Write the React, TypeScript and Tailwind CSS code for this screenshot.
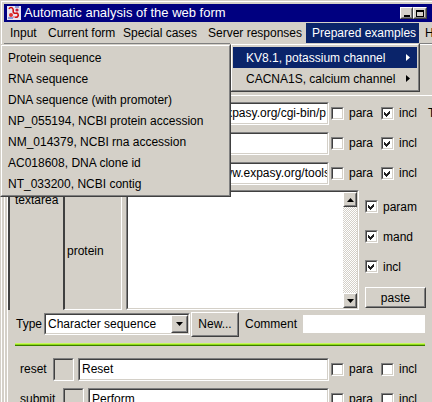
import React from "react";

type Kids = { className?: string; children?: React.ReactNode };

function Raised({ className = "", children }: Kids) {
  return (
    <div className={`border border-t-white border-l-white border-b-[#404040] border-r-[#404040] ${className}`}>
      <div className="w-full h-full border border-t-[#d4d0c8] border-l-[#d4d0c8] border-b-[#808080] border-r-[#808080] bg-[#d4d0c8] flex items-center justify-center">
        {children}
      </div>
    </div>
  );
}

function Sunken({ className = "", inner = "bg-white", children }: Kids & { inner?: string }) {
  return (
    <div className={`border border-t-[#808080] border-l-[#808080] border-b-white border-r-white ${className}`}>
      <div className={`w-full h-full border border-t-[#404040] border-l-[#404040] border-b-[#d4d0c8] border-r-[#d4d0c8] overflow-hidden ${inner}`}>
        {children}
      </div>
    </div>
  );
}

function Check({ checked }: { checked?: boolean }) {
  return (
    <Sunken className="w-[13px] h-[13px] shrink-0">
      {checked && (
        <svg width="9" height="9" viewBox="0 0 9 9" className="block">
          <path d="M1 3h1v1h1v1h1V4h1V3h1V2h1v3H6v1H5v1H4v1H3V7H2V6H1z" fill="#222" />
        </svg>
      )}
    </Sunken>
  );
}

function DownTri() {
  return (
    <svg width="7" height="4" viewBox="0 0 7 4" className="block">
      <path d="M0 0h7L3.5 4z" fill="#000" />
    </svg>
  );
}

function UpTri() {
  return (
    <svg width="7" height="4" viewBox="0 0 7 4" className="block">
      <path d="M0 4h7L3.5 0z" fill="#000" />
    </svg>
  );
}

function RightTri({ color }: { color: string }) {
  return (
    <svg width="4" height="7" viewBox="0 0 4 7" className="block">
      <path d="M0 0v7l4-3.5z" fill={color} />
    </svg>
  );
}

function Opts({ para, incl }: { para?: boolean; incl?: boolean }) {
  return (
    <>
      <div className="ml-[2px] w-[50px] flex items-center shrink-0">
        <Check checked={para} />
        <span className="ml-[5px]">para</span>
      </div>
      <div className="w-[47px] flex items-center shrink-0">
        <Check checked={incl} />
        <span className="ml-[5px]">incl</span>
      </div>
    </>
  );
}

function UrlRow({ text, shift, tail }: { text: string; shift: string; tail?: string }) {
  return (
    <div className="h-[30px] flex items-center shrink-0">
      <div className="w-[118px] shrink-0" />
      <Sunken className="w-[203px] h-[23px] shrink-0">
        <div className="h-full flex items-center justify-end whitespace-nowrap">
          <span className={`shrink-0 ${shift}`}>{text}</span>
        </div>
      </Sunken>
      <Opts para={false} incl={true} />
      {tail && <span>{tail}</span>}
    </div>
  );
}

function TitleIcon() {
  return (
    <svg width="16" height="16" viewBox="0 0 16 16" className="block">
      <rect x="1" y="1" width="14" height="14" fill="#e8e4f0" />
      <path d="M3 4c1-2 3-2 4 0s-1 3 1 4 3-1 4 1-1 4-3 3" stroke="#d01010" strokeWidth="1.6" fill="none" />
      <circle cx="5" cy="10" r="2" fill="#e03030" />
      <circle cx="11" cy="5" r="1.6" fill="#c02040" />
      <path d="M2 13h5M9 2h4" stroke="#3050c0" strokeWidth="1" />
      <circle cx="8" cy="12" r="1" fill="#f08080" />
    </svg>
  );
}

const menu: { label: string; w: string; active?: boolean }[] = [
  { label: "Input", w: "w-[38px]" },
  { label: "Current form", w: "w-[75px]" },
  { label: "Special cases", w: "w-[85px]" },
  { label: "Server responses", w: "w-[104px]" },
  { label: "Prepared examples", w: "w-[113px]", active: true },
  { label: "Help", w: "w-[40px]" },
];

const examples = [
  "Protein sequence",
  "RNA sequence",
  "DNA sequence (with promoter)",
  "NP_055194, NCBI protein accession",
  "NM_014379, NCBI rna accession",
  "AC018608, DNA clone id",
  "NT_033200, NCBI contig",
];

export default function App() {
  return (
    <div className="relative w-[432px] h-[402px] overflow-hidden bg-[#d4d0c8] text-[12px] leading-[14px] text-black font-['Liberation_Sans',Arial,sans-serif]">
      <div className="h-full pt-[4px] pl-[4px] shadow-[inset_1px_1px_0_#d4d0c8,inset_2px_2px_0_#ffffff] flex flex-col">
        {/* Title bar */}
        <div className="h-[18px] bg-[#000080] flex items-center shrink-0">
          <div className="ml-[2px]">
            <TitleIcon />
          </div>
          <span className="ml-[2px] text-white text-[13px] leading-[16px] whitespace-nowrap">
            Automatic analysis of the web form
          </span>
          <div className="ml-auto mr-[5px] flex items-center">
            <Raised className="w-[13px] h-[12px]">
              <div className="w-[6px] h-[2px] bg-black mt-[5px]" />
            </Raised>
            <Raised className="w-[14px] h-[12px]">
              <div className="w-[8px] h-[7px] border border-black border-t-2" />
            </Raised>
          </div>
        </div>

        {/* Menu bar */}
        <div className="h-[21px] pt-[1px] flex shrink-0">
          {menu.map((m) => (
            <div
              key={m.label}
              className={`${m.w} h-[20px] pl-[6px] flex items-center whitespace-nowrap shrink-0 ${
                m.active ? "bg-[#0a246a] text-white" : ""
              }`}
            >
              {m.label}
            </div>
          ))}
        </div>
        <div className="h-[1px] bg-[#808080] shrink-0" />
        <div className="h-[1px] bg-white shrink-0" />

        {/* Content */}
        <div className="flex-1 border-l border-white flex flex-col">
          <div className="ml-[2px] border-l border-white flex flex-col">
            <div className="h-[51px] border-b border-white shrink-0" />
            <div className="h-[2px] shrink-0" />
            <UrlRow text="http://www.expasy.org/cgi-bin/p" shift="mr-[1px]" tail="T" />
            <UrlRow text="" shift="" />
            <UrlRow text="http://www.expasy.org/tools" shift="mr-[-3px]" />
            <div className="h-[2px] shrink-0" />

            {/* textarea section */}
            <div className="h-[120px] flex shrink-0">
              <div className="w-[55px] border-l-2 border-[#404040] pl-[5px] pt-[3px] shrink-0">textarea</div>
              <div className="w-[59px] border-l-2 border-l-[#404040] border-r border-r-white border-b border-b-white pl-[2px] pt-[3px] flex items-center shrink-0">
                protein
              </div>
              <div className="w-[4px] shrink-0" />
              <Sunken className="w-[233px] h-full shrink-0">
                <div className="h-full flex">
                  <div className="flex-1 bg-white" />
                  <div className="w-[14px] flex flex-col">
                    <Raised className="w-[14px] h-[15px]">
                      <UpTri />
                    </Raised>
                    <div className="flex-1 bg-[repeating-conic-gradient(#d4d0c8_0%_25%,#ffffff_0%_50%)] bg-[length:2px_2px]" />
                    <Raised className="w-[14px] h-[15px]">
                      <DownTri />
                    </Raised>
                  </div>
                </div>
              </Sunken>
              <div className="w-[6px] shrink-0" />
              <div className="flex flex-col pt-[10px] shrink-0">
                <div className="h-[13px] flex items-center">
                  <Check checked />
                  <span className="ml-[5px]">param</span>
                </div>
                <div className="h-[13px] mt-[17px] flex items-center">
                  <Check checked />
                  <span className="ml-[5px]">mand</span>
                </div>
                <div className="h-[13px] mt-[17px] flex items-center">
                  <Check checked />
                  <span className="ml-[5px]">incl</span>
                </div>
                <Raised className="mt-[14px] w-[61px] h-[21px]">
                  <span>paste</span>
                </Raised>
              </div>
            </div>

            {/* Type row */}
            <div className="h-[28px] flex items-center shrink-0">
              <div className="w-[36px] pl-[8px] shrink-0">Type</div>
              <Sunken className="w-[146px] h-[22px] shrink-0">
                <div className="h-full flex">
                  <div className="flex-1 pl-[2px] flex items-center whitespace-nowrap">Character sequence</div>
                  <Raised className="w-[17px] h-full">
                    <DownTri />
                  </Raised>
                </div>
              </Sunken>
              <Raised className="ml-[1px] w-[48px] h-[25px] shrink-0">
                <span>New...</span>
              </Raised>
              <div className="ml-[6px] w-[58px] shrink-0">Comment</div>
              <div className="w-[122px] h-[18px] bg-white shrink-0" />
            </div>

            {/* green separator */}
            <div className="mt-[5px] ml-[7px] w-[410px] h-[3px] flex flex-col shrink-0">
              <div className="h-[1px] bg-[#c8f860]" />
              <div className="h-[1px] bg-[#90d818]" />
              <div className="h-[1px] bg-[#3c7c00]" />
            </div>

            {/* reset row */}
            <div className="mt-[11px] h-[24px] flex items-center shrink-0">
              <div className="w-[45px] pl-[12px] shrink-0">reset</div>
              <Sunken className="w-[21px] h-[23px] shrink-0" inner="bg-[#d4d0c8]" />
              <div className="w-[4px] shrink-0" />
              <Sunken className="w-[251px] h-[23px] shrink-0">
                <div className="h-full pl-[2px] flex items-center">Reset</div>
              </Sunken>
              <Opts />
            </div>

            {/* submit row */}
            <div className="mt-[6px] h-[24px] flex items-center shrink-0">
              <div className="w-[55px] pl-[12px] shrink-0">submit</div>
              <Sunken className="w-[21px] h-[23px] shrink-0" inner="bg-[#d4d0c8]" />
              <div className="w-[4px] shrink-0" />
              <Sunken className="w-[241px] h-[23px] shrink-0">
                <div className="h-full pl-[2px] flex items-center">Perform</div>
              </Sunken>
              <Opts />
            </div>
          </div>
        </div>
      </div>

      {/* Prepared examples dropdown */}
      <div className="absolute left-[230px] top-[43px] w-[190px] h-[49px] border border-t-[#d4d0c8] border-l-[#d4d0c8] border-b-[#404040] border-r-[#404040] bg-[#d4d0c8]">
        <div className="h-full border border-t-white border-l-white border-b-[#808080] border-r-[#808080] px-[1px] pt-[2px]">
          <div className="h-[21px] bg-[#0a246a] text-white flex items-center pl-[13px] pr-[7px] whitespace-nowrap">
            <span>KV8.1, potassium channel</span>
            <span className="ml-auto">
              <RightTri color="#ffffff" />
            </span>
          </div>
          <div className="h-[21px] flex items-center pl-[13px] pr-[7px] whitespace-nowrap">
            <span>CACNA1S, calcium channel</span>
            <span className="ml-auto">
              <RightTri color="#000000" />
            </span>
          </div>
        </div>
      </div>

      {/* nested submenu (opened to the left) */}
      <div className="absolute left-0 top-[44px] w-[231px] h-[153px] border border-t-[#d4d0c8] border-l-[#d4d0c8] border-b-[#404040] border-r-[#404040] bg-[#d4d0c8]">
        <div className="h-full border border-t-white border-l-white border-b-[#808080] border-r-[#808080] p-[1px]">
          {examples.map((e) => (
            <div key={e} className="h-[21px] pl-[5px] flex items-center whitespace-nowrap">
              {e}
            </div>
          ))}
        </div>
      </div>
    </div>
  );
}
